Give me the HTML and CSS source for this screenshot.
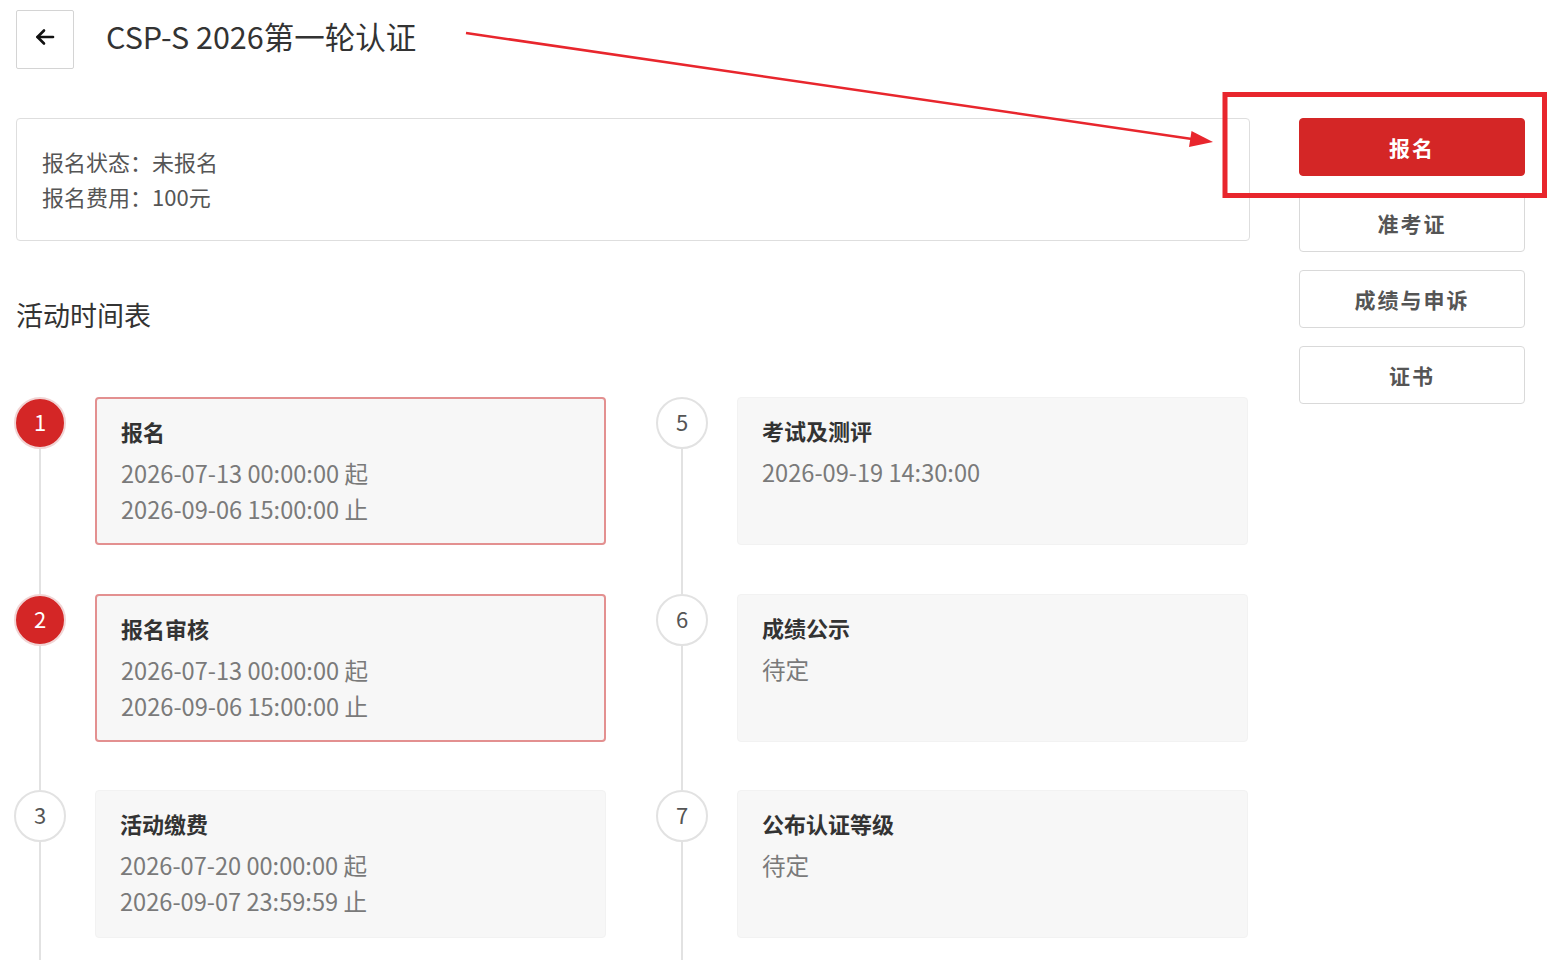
FILE: index.html
```html
<!doctype html>
<html lang="zh-CN">
  <head>
    <meta charset="UTF-8" />
    <meta name="viewport" content="width=device-width, initial-scale=1.0" />
    <title>CSP-S 2026第一轮认证</title>
    <link rel="stylesheet" href="styles.css">
  </head>
  <body>
    <header class="top-bar">
      <button class="back-btn" type="button" aria-label="返回">
        <svg width="22" height="22" viewBox="0 0 22 22" fill="none" stroke="#111" stroke-width="2.6" stroke-linecap="round" stroke-linejoin="round">
          <path d="M19 11H3.5" />
          <path d="M10 4.5L3.5 11L10 17.5" />
        </svg>
      </button>
      <h1 class="page-title">CSP-S 2026第一轮认证</h1>
    </header>

    <div class="layout">
      <main class="main-col">
        <section class="info-card">
          <p>报名状态：未报名</p>
          <p>报名费用：100元</p>
        </section>

        <h2 class="section-title">活动时间表</h2>

        <div class="timeline">
          <div class="timeline-col">
            <div class="step done">
              <div class="marker"><span class="dot">1</span><span class="line"></span></div>
              <div class="step-card">
                <div class="step-name">报名</div>
                <div class="step-time">2026-07-13 00:00:00 起</div>
                <div class="step-time">2026-09-06 15:00:00 止</div>
              </div>
            </div>
            <div class="step done">
              <div class="marker"><span class="dot">2</span><span class="line"></span></div>
              <div class="step-card">
                <div class="step-name">报名审核</div>
                <div class="step-time">2026-07-13 00:00:00 起</div>
                <div class="step-time">2026-09-06 15:00:00 止</div>
              </div>
            </div>
            <div class="step">
              <div class="marker"><span class="dot">3</span><span class="line"></span></div>
              <div class="step-card">
                <div class="step-name">活动缴费</div>
                <div class="step-time">2026-07-20 00:00:00 起</div>
                <div class="step-time">2026-09-07 23:59:59 止</div>
              </div>
            </div>
          </div>

          <div class="timeline-col">
            <div class="step">
              <div class="marker"><span class="dot">5</span><span class="line"></span></div>
              <div class="step-card">
                <div class="step-name">考试及测评</div>
                <div class="step-time">2026-09-19 14:30:00</div>
              </div>
            </div>
            <div class="step">
              <div class="marker"><span class="dot">6</span><span class="line"></span></div>
              <div class="step-card">
                <div class="step-name">成绩公示</div>
                <div class="step-time">待定</div>
              </div>
            </div>
            <div class="step">
              <div class="marker"><span class="dot">7</span><span class="line"></span></div>
              <div class="step-card">
                <div class="step-name">公布认证等级</div>
                <div class="step-time">待定</div>
              </div>
            </div>
          </div>
        </div>
      </main>

      <aside class="side-col">
        <button class="side-btn primary" type="button">报名</button>
        <button class="side-btn" type="button">准考证</button>
        <button class="side-btn" type="button">成绩与申诉</button>
        <button class="side-btn" type="button">证书</button>
      </aside>
    </div>

    <!-- red callout pointing at the sign-up button -->
    <svg class="callout" width="1548" height="960" viewBox="0 0 1548 960">
      <line x1="466" y1="33" x2="1192" y2="139" stroke="#e8262d" stroke-width="2.5" />
      <polygon points="1213,142 1189,147 1191.5,131" fill="#e8262d" />
      <rect x="1225" y="94.5" width="319.5" height="101" fill="none" stroke="#e8262d" stroke-width="5" />
    </svg>
  </body>
</html>
```

FILE: styles.css
```css
* {
  box-sizing: border-box;
}
body {
  margin: 0;
  padding: 10px 16px 0;
  font-family: "Noto Sans CJK SC", "Noto Sans", sans-serif;
  color: #333;
  background: #fff;
  overflow: hidden;
}
p {
  margin: 0;
}

/* header */
.top-bar {
  display: flex;
  align-items: center;
  height: 59px;
}
.back-btn {
  width: 58px;
  height: 59px;
  border: 1px solid #d4d4d4;
  border-radius: 2px;
  background: #fff;
  display: flex;
  align-items: center;
  justify-content: center;
  padding: 0 0 6px;
}
.page-title {
  margin: 0 0 8px 32px;
  font-size: 30.5px;
  font-weight: 400;
  color: #333;
}

/* page body */
.layout {
  display: flex;
  gap: 49px;
  margin-top: 49px;
}
.main-col {
  width: 1234px;
}
.side-col {
  width: 226px;
  display: flex;
  flex-direction: column;
  gap: 18px;
}
.side-btn {
  height: 58px;
  border: 1px solid #d9d9d9;
  border-radius: 4px;
  background: #fff;
  font-family: inherit;
  font-size: 21px;
  font-weight: 700;
  letter-spacing: 2px;
  color: #555;
}
.side-btn.primary {
  background: #d42626;
  border-color: #d42626;
  color: #fff;
}

.info-card {
  border: 1px solid #dedede;
  border-radius: 4px;
  padding: 25px 25px 26px;
  font-size: 22px;
  line-height: 35px;
  color: #555;
}
.section-title {
  margin: 56px 0 0;
  font-size: 27px;
  font-weight: 400;
  line-height: 36px;
  color: #333;
}

/* timeline */
.timeline {
  display: flex;
  gap: 50px;
  margin: 64px 0 0 -2px;
}
.timeline-col {
  width: 592px;
  display: flex;
  flex-direction: column;
}
.step {
  display: flex;
  gap: 29px;
  padding-bottom: 48.5px;
}
.marker {
  width: 52px;
  display: flex;
  flex-direction: column;
  align-items: center;
  margin-bottom: -48.5px;
}
.dot {
  width: 52px;
  height: 52px;
  flex: none;
  border-radius: 50%;
  border: 2px solid #e2e2e2;
  background: #fff;
  color: #555;
  font-size: 22px;
  line-height: 44px;
  text-align: center;
}
.line {
  flex: 1;
  width: 2px;
  background: #e2e2e2;
}
.step.done .dot {
  background: #d42626;
  border-color: #f1d4d4;
  color: #fff;
}
.step-card {
  width: 511px;
  height: 148px;
  padding: 15px 24px 0;
  background: #f7f7f7;
  border: 1px solid #f2f2f2;
  border-radius: 4px;
}
.step.done .step-card {
  border: 2px solid #e39090;
}
.step-name {
  font-size: 22px;
  font-weight: 700;
  line-height: 34px;
  color: #333;
  margin-bottom: 7px;
}
.step-time {
  font-size: 23.6px;
  line-height: 36px;
  color: #7a7a7a;
}

.callout {
  position: absolute;
  top: 0;
  left: 0;
  pointer-events: none;
}
```
